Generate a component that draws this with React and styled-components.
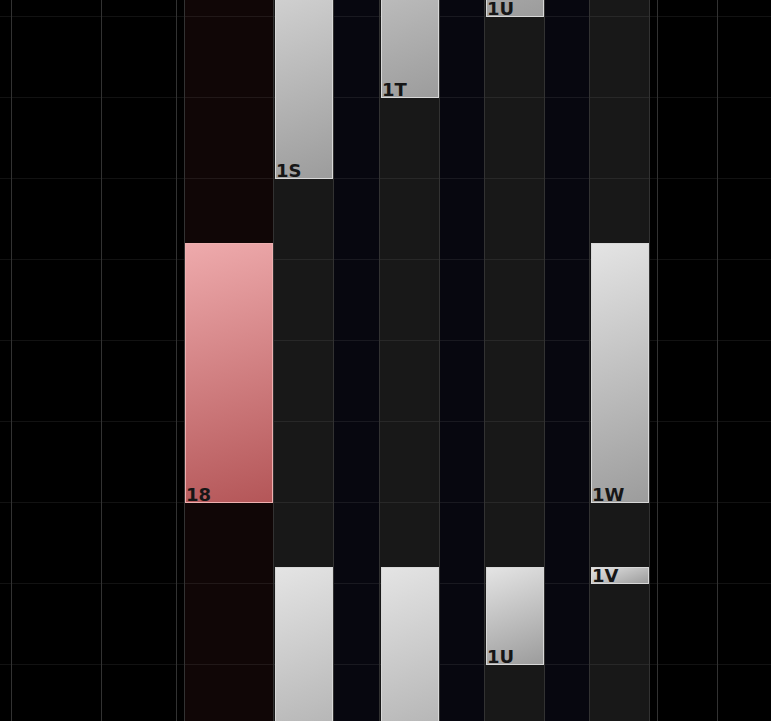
import React from 'react';
import styled, { createGlobalStyle } from 'styled-components';

// columns of the scrolled week grid, left to right
const COLUMNS = [
  { w: 11, kind: 'off' },
  { w: 90, kind: 'off', left: true },
  { w: 75, kind: 'off', left: true },
  { w: 8, kind: 'off', left: true },
  {
    w: 89, kind: 'today', left: true,
    events: [{ id: '18', top: 243, height: 260, tone: 'red', inset: 0 }],
  },
  {
    w: 61, kind: 'busy', left: true, right: true,
    events: [
      { id: '1S', top: -81, height: 260 },
      { id: '', top: 567, height: 260 },
    ],
  },
  { w: 45, kind: 'night' },
  {
    w: 61, kind: 'busy', left: true, right: true,
    events: [
      { id: '1T', top: -162, height: 260 },
      { id: '', top: 567, height: 260 },
    ],
  },
  { w: 44, kind: 'night' },
  {
    w: 61, kind: 'busy', left: true, right: true,
    events: [
      { id: '1U', top: -243, height: 260 },
      { id: '1U', top: 567, height: 98 },
    ],
  },
  { w: 44, kind: 'night' },
  {
    w: 61, kind: 'busy', left: true, right: true,
    events: [
      { id: '1W', top: 243, height: 260 },
      { id: '1V', top: 567, height: 17 },
    ],
  },
  { w: 7, kind: 'off' },
  { w: 60, kind: 'off', left: true },
  { w: 54, kind: 'off', left: true },
];

const BG = {
  off: '#000000',
  today: '#100606',
  busy: '#181818',
  night: '#07070f',
};

const TONES = {
  gray: {
    fill: 'linear-gradient(160deg, #e4e4e4 0%, #9c9c9c 100%)',
    edge: '#d8d8d8',
  },
  red: {
    fill: 'linear-gradient(165deg, #eeaaac 0%, #b45658 100%)',
    edge: '#eeb0b0',
  },
};

export default function App() {
  return (
    <>
      <GlobalStyle />
      <Grid>
        {COLUMNS.map((col, i) => (
          <Column
            key={i}
            $w={col.w}
            $bg={BG[col.kind]}
            $left={col.left}
            $right={col.right}
          >
            {(col.events || []).map((ev, j) => (
              <Event
                key={j}
                $top={ev.top}
                $height={ev.height}
                $tone={ev.tone || 'gray'}
                $inset={ev.inset}
              >
                {ev.id && <Label>{ev.id}</Label>}
              </Event>
            ))}
          </Column>
        ))}
      </Grid>
    </>
  );
}

const GlobalStyle = createGlobalStyle`
  html, body {
    margin: 0;
    padding: 0;
    background: #000;
    overflow: hidden;
  }
`;

const Grid = styled.div`
  display: flex;
  width: 771px;
  height: 721px;
  overflow: hidden;
  background: #000;
`;

const Column = styled.div`
  position: relative;
  box-sizing: border-box;
  flex: 0 0 ${p => p.$w}px;
  height: 100%;
  background-color: ${p => p.$bg};
  background-image: linear-gradient(to bottom, rgba(255, 255, 255, 0.07) 1px, transparent 1px);
  background-size: 100% 81px;
  background-position: 0 16px;
  border-left: ${p => (p.$left ? '1px solid #323232' : 'none')};
  border-right: ${p => (p.$right ? '1px solid #323232' : 'none')};
`;

const Event = styled.div`
  position: absolute;
  box-sizing: border-box;
  top: ${p => p.$top}px;
  height: ${p => p.$height}px;
  left: ${p => (p.$inset === 0 ? 0 : 1)}px;
  right: 0;
  background: ${p => TONES[p.$tone].fill};
  border: 1px solid ${p => TONES[p.$tone].edge};
`;

const Label = styled.span`
  position: absolute;
  left: 0;
  bottom: -2px;
  font-family: "DejaVu Sans", Verdana, sans-serif;
  font-weight: bold;
  font-size: 18px;
  line-height: 18px;
  color: #161616;
  white-space: nowrap;
`;
